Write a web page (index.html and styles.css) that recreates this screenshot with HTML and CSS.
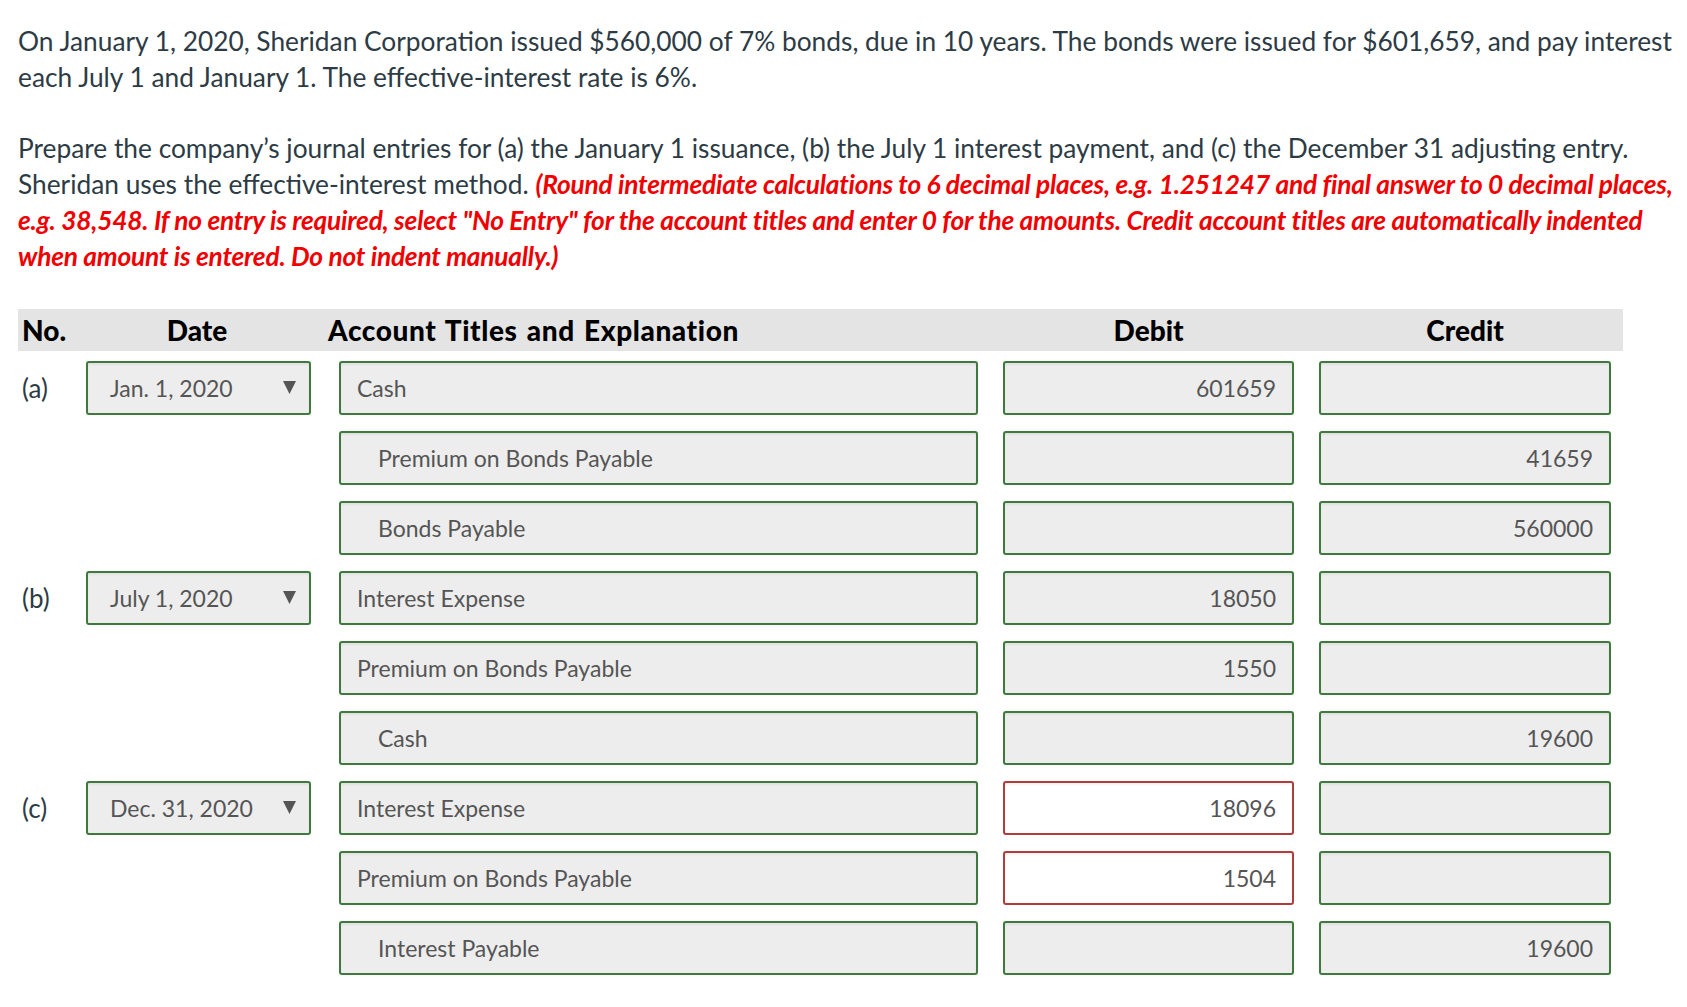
FILE: index.html
```html
<!DOCTYPE html>
<html lang="en">
<head>
<meta charset="utf-8">
<title>Journal entries</title>
<link rel="stylesheet" href="styles.css">
</head>
<body>
<div class="page">
  <p class="q">On January 1, 2020, Sheridan Corporation issued $560,000 of 7% bonds, due in 10 years. The bonds were issued for $601,659, and pay interest each July 1 and January 1. The effective-interest rate is 6%.</p>
  <p class="q">Prepare the company’s journal entries for (a) the January 1 issuance, (b) the July 1 interest payment, and (c) the December 31 adjusting entry. Sheridan uses the effective-interest method. <em class="note">(Round intermediate calculations to 6 decimal places, e.g. 1.251247 and final answer to 0 decimal places, e.g. 38,548. If no entry is required, select "No Entry" for the account titles and enter 0 for the amounts. Credit account titles are automatically indented when amount is entered. Do not indent manually.)</em></p>

  <div class="journal">
    <div class="jhead">
      <div class="h-no">No.</div>
      <div class="h-center">Date</div>
      <div class="h-acct">Account Titles and Explanation</div>
      <div class="h-center">Debit</div>
      <div class="h-center">Credit</div>
    </div>

    <div class="jbody">
      <div class="lbl">(a)</div>
      <div class="box date">Jan. 1, 2020<svg class="arrow" width="13" height="13" viewBox="0 0 13 13"><polygon points="0,0 13,0 6.5,13" fill="#555"/></svg></div>
      <div class="box acct">Cash</div>
      <div class="box num">601659</div>
      <div class="box num"></div>

      <div></div><div></div>
      <div class="box acct indent">Premium on Bonds Payable</div>
      <div class="box num"></div>
      <div class="box num">41659</div>

      <div></div><div></div>
      <div class="box acct indent">Bonds Payable</div>
      <div class="box num"></div>
      <div class="box num">560000</div>

      <div class="lbl">(b)</div>
      <div class="box date">July 1, 2020<svg class="arrow" width="13" height="13" viewBox="0 0 13 13"><polygon points="0,0 13,0 6.5,13" fill="#555"/></svg></div>
      <div class="box acct">Interest Expense</div>
      <div class="box num">18050</div>
      <div class="box num"></div>

      <div></div><div></div>
      <div class="box acct">Premium on Bonds Payable</div>
      <div class="box num">1550</div>
      <div class="box num"></div>

      <div></div><div></div>
      <div class="box acct indent">Cash</div>
      <div class="box num"></div>
      <div class="box num">19600</div>

      <div class="lbl">(c)</div>
      <div class="box date">Dec. 31, 2020<svg class="arrow" width="13" height="13" viewBox="0 0 13 13"><polygon points="0,0 13,0 6.5,13" fill="#555"/></svg></div>
      <div class="box acct">Interest Expense</div>
      <div class="box num wrong">18096</div>
      <div class="box num"></div>

      <div></div><div></div>
      <div class="box acct">Premium on Bonds Payable</div>
      <div class="box num wrong">1504</div>
      <div class="box num"></div>

      <div></div><div></div>
      <div class="box acct indent">Interest Payable</div>
      <div class="box num"></div>
      <div class="box num">19600</div>
    </div>
  </div>
</div>
</body>
</html>
```
FILE: styles.css
```css
html, body {
  margin: 0;
  padding: 0;
  background: #ffffff;
}

.page {
  padding: 23px 4px 0 18px;
  font-family: Lato, "Open Sans", sans-serif;
  color: #2d3b45;
}

.q {
  margin: 0 0 35px 0;
  font-size: 26.3px;
  line-height: 36px;
}

.note {
  color: #f00000;
  font-weight: 700;
  font-style: italic;
  letter-spacing: -0.22px;
}

.journal {
  width: 1605px;
}

.jhead {
  display: grid;
  grid-template-columns: 43px 225px 642px 291px 292px;
  column-gap: 25px;
  align-items: center;
  height: 42px;
  padding-right: 12px;
  background: #e4e4e4;
  color: #000;
  font-size: 28px;
  font-weight: 900;
}

.jhead > div:nth-child(2) {
  margin-right: 3px;
}

.h-no {
  padding-left: 4px;
}

.h-center {
  text-align: center;
}

.h-acct {
  margin-left: -8px;
  letter-spacing: 0.6px;
  word-spacing: 2px;
}

.jbody {
  display: grid;
  grid-template-columns: 43px 228px 639px 291px 292px;
  grid-auto-rows: 54px;
  column-gap: 25px;
  row-gap: 16px;
  margin-top: 10px;
}

.lbl {
  display: flex;
  align-items: center;
  padding-left: 4px;
  font-size: 26px;
  color: #2d3b45;
}

.box {
  box-sizing: border-box;
  height: 54px;
  display: flex;
  align-items: center;
  border: 2px solid #3d7a3b;
  border-radius: 3px;
  background: #ededed;
  box-shadow: inset 0 2px 2px rgba(0, 0, 0, 0.05);
  color: #555555;
  font-size: 23px;
  white-space: nowrap;
}

.date {
  width: 225px;
  padding: 0 13px 0 22px;
  justify-content: space-between;
}

.arrow {
  display: block;
  margin-top: -2px;
}

.acct {
  padding-left: 16px;
}

.acct.indent {
  padding-left: 37px;
}

.num {
  justify-content: flex-end;
  padding-right: 16px;
}

.num.wrong {
  border-color: #b03c3c;
  background: #ffffff;
}
```
